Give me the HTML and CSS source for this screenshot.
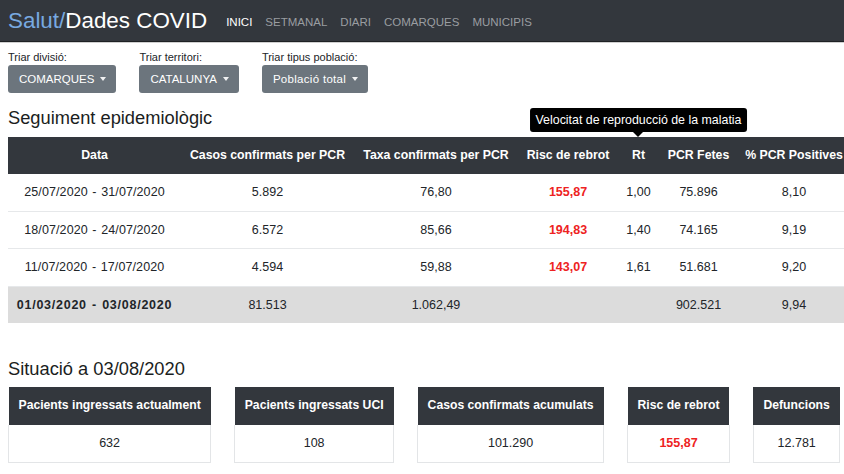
FILE: index.html
```html
<!DOCTYPE html>
<html lang="ca">
<head>
<meta charset="utf-8">
<title>Salut/Dades COVID</title>
<link rel="stylesheet" href="styles.css">
</head>
<body>
<nav class="navbar">
  <a class="brand"><span class="brand-salut">Salut/</span>Dades COVID</a>
  <ul class="nav-links">
    <li class="active">INICI</li>
    <li>SETMANAL</li>
    <li>DIARI</li>
    <li>COMARQUES</li>
    <li>MUNICIPIS</li>
  </ul>
</nav>
<main class="page">
  <div class="filters">
    <div class="filter">
      <label class="filter-label">Triar divisió:</label>
      <button class="dropdown">COMARQUES<span class="caret"></span></button>
    </div>
    <div class="filter">
      <label class="filter-label">Triar territori:</label>
      <button class="dropdown">CATALUNYA<span class="caret"></span></button>
    </div>
    <div class="filter">
      <label class="filter-label">Triar tipus població:</label>
      <button class="dropdown wide-text">Població total<span class="caret"></span></button>
    </div>
  </div>

  <h2 class="section-title first">Seguiment epidemiològic</h2>
  <table class="data-table">
    <colgroup>
      <col class="c-data"><col class="c-casos"><col class="c-taxa"><col class="c-risc"><col class="c-rt"><col class="c-pcr"><col class="c-pos">
    </colgroup>
    <thead>
      <tr>
        <th>Data</th>
        <th>Casos confirmats per PCR</th>
        <th>Taxa confirmats per PCR</th>
        <th>Risc de rebrot</th>
        <th class="has-tip">Rt<span class="tooltip">Velocitat de reproducció de la malatia</span></th>
        <th>PCR Fetes</th>
        <th>% PCR Positives</th>
      </tr>
    </thead>
    <tbody>
      <tr>
        <td class="date">25/07/2020 - 31/07/2020</td><td>5.892</td><td>76,80</td><td class="risk">155,87</td><td>1,00</td><td>75.896</td><td>8,10</td>
      </tr>
      <tr>
        <td class="date">18/07/2020 - 24/07/2020</td><td>6.572</td><td>85,66</td><td class="risk">194,83</td><td>1,40</td><td>74.165</td><td>9,19</td>
      </tr>
      <tr>
        <td class="date">11/07/2020 - 17/07/2020</td><td>4.594</td><td>59,88</td><td class="risk">143,07</td><td>1,61</td><td>51.681</td><td>9,20</td>
      </tr>
      <tr class="total">
        <th class="date">01/03/2020 - 03/08/2020</th><td>81.513</td><td>1.062,49</td><td></td><td></td><td>902.521</td><td>9,94</td>
      </tr>
    </tbody>
  </table>

  <h2 class="section-title second">Situació a 03/08/2020</h2>
  <div class="cards">
    <table class="card">
      <tr><th>Pacients ingressats actualment</th></tr>
      <tr><td>632</td></tr>
    </table>
    <table class="card">
      <tr><th>Pacients ingressats UCI</th></tr>
      <tr><td>108</td></tr>
    </table>
    <table class="card">
      <tr><th>Casos confirmats acumulats</th></tr>
      <tr><td>101.290</td></tr>
    </table>
    <table class="card">
      <tr><th>Risc de rebrot</th></tr>
      <tr><td class="risk">155,87</td></tr>
    </table>
    <table class="card">
      <tr><th>Defuncions</th></tr>
      <tr><td>12.781</td></tr>
    </table>
  </div>
</main>
</body>
</html>
```

FILE: styles.css
```css
html, body {
  overflow-x: hidden;
}
body {
  margin: 0;
  font-family: "Liberation Sans", Arial, Helvetica, sans-serif;
  color: #212529;
  background: #fff;
  font-size: 12.4px;
}

/* Navbar */
.navbar {
  display: flex;
  align-items: center;
  height: 41px;
  padding: 0 8px;
  background: #33373d;
  border-bottom: 1px solid #1e2124;
  box-shadow: 0 1px 0 #d0d0d0;
}
.brand {
  font-size: 22.4px;
  color: #fff;
  margin-right: 19px;
  white-space: nowrap;
}
.brand-salut {
  color: #78a9e0;
}
.nav-links {
  display: flex;
  gap: 13px;
  list-style: none;
  margin: 3px 0 0;
  padding: 0;
  font-size: 11.5px;
  color: #9a9da1;
}
.nav-links .active {
  color: #fff;
}

/* Page */
.page {
  padding: 0 8px;
}

.filters {
  display: flex;
  gap: 23px;
  padding-top: 8px;
}
.filter {
  display: flex;
  flex-direction: column;
  align-items: flex-start;
}
.filter-label {
  font-size: 11px;
  line-height: 14px;
  margin-bottom: 1px;
  color: #212529;
}
.dropdown {
  display: flex;
  align-items: center;
  height: 28px;
  padding: 0 10px 0 11px;
  border: none;
  border-radius: 3px;
  background: #6c757d;
  color: #fff;
  font-family: inherit;
  font-size: 11.5px;
}
.dropdown.wide-text {
  letter-spacing: 0.3px;
}
.caret {
  display: inline-block;
  margin-left: 6px;
  border-top: 4px solid #fff;
  border-left: 3px solid transparent;
  border-right: 3px solid transparent;
  opacity: 0.9;
}

.section-title {
  font-size: 18.3px;
  font-weight: normal;
  line-height: 22px;
  margin: 0;
  color: #1b1e21;
}
.section-title.first {
  margin-top: 14px;
  margin-bottom: 8px;
}
.section-title.second {
  margin-top: 35px;
  margin-bottom: 7px;
}

/* Main table */
.data-table {
  border-collapse: collapse;
  table-layout: fixed;
  width: 842px;
}
.c-data { width: 173px; }
.c-casos { width: 173px; }
.c-taxa { width: 164px; }
.c-risc { width: 100px; }
.c-rt { width: 41px; }
.c-pcr { width: 79px; }
.c-pos { width: 112px; }

.data-table th,
.data-table td {
  text-align: center;
  white-space: nowrap;
  padding: 11px 0;
  line-height: 15px;
}
.data-table thead th {
  background: #33373d;
  color: #fff;
  font-size: 12.3px;
  font-weight: bold;
}
.data-table tbody td,
.data-table tbody th {
  border-top: 1px solid #e6e8ea;
  padding: 11px 0 10px;
  line-height: 15.5px;
}
.data-table tbody td {
  font-size: 12.5px;
}
.data-table tbody .date {
  word-spacing: 1px;
  letter-spacing: 0.1px;
}
.data-table tbody tr:first-child td {
  border-top: none;
}
.data-table .total {
  background: #dcdcdc;
}
.data-table .total th {
  font-weight: bold;
  font-size: 12.5px;
  letter-spacing: 0.75px;
  word-spacing: 1px;
}
.risk {
  color: #ee2222;
  font-weight: bold;
}

/* Tooltip */
.has-tip {
  position: relative;
}
.tooltip {
  position: absolute;
  left: 50%;
  bottom: calc(100% + 5px);
  transform: translateX(-50%);
  background: #000;
  color: #fff;
  font-weight: normal;
  font-size: 12.4px;
  line-height: 16px;
  padding: 4px 6px;
  border-radius: 3px;
  white-space: nowrap;
  word-spacing: 0;
  letter-spacing: 0;
}
.tooltip::after {
  content: "";
  position: absolute;
  top: 100%;
  left: 50%;
  margin-left: -5px;
  border-top: 5px solid #000;
  border-left: 5px solid transparent;
  border-right: 5px solid transparent;
}

/* Cards */
.cards {
  display: flex;
  gap: 23px;
  align-items: flex-start;
}
.card {
  flex-shrink: 0;
  border-collapse: collapse;
}
.card th {
  background: #33373d;
  color: #fff;
  font-size: 12.2px;
  font-weight: bold;
  padding: 11px 10px 12px;
  line-height: 15px;
  white-space: nowrap;
}
.card td {
  text-align: center;
  font-size: 12.5px;
  padding: 11px 10px;
  line-height: 15px;
  border: 1px solid #e3e5e7;
  border-top: none;
}
```
